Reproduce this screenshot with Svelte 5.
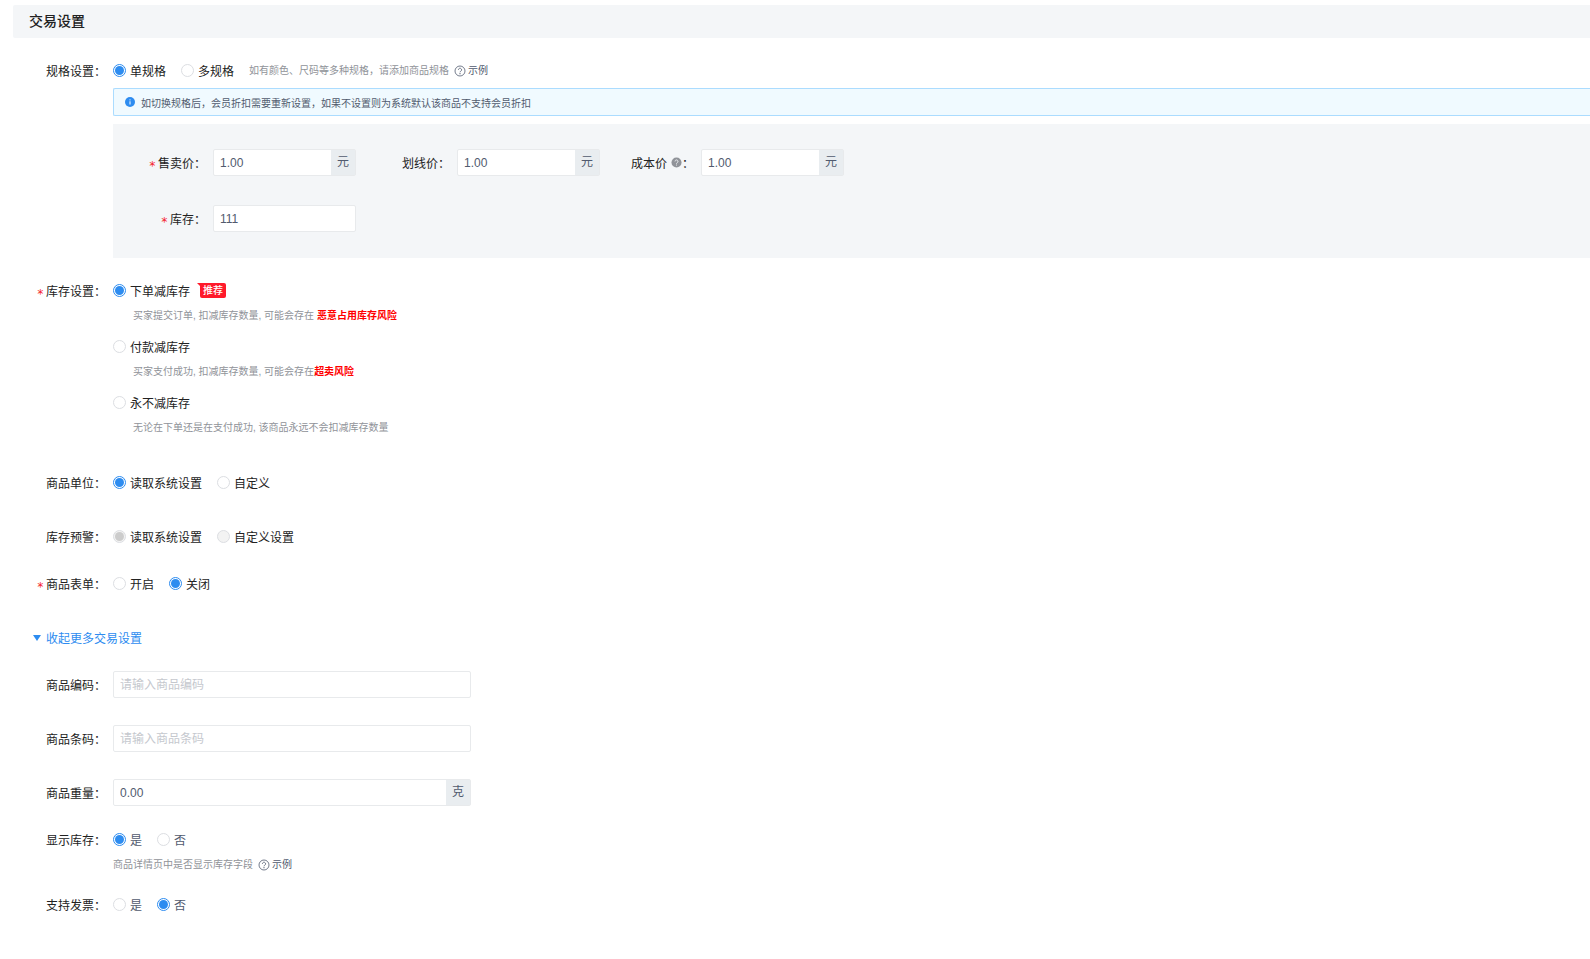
<script>

    let goods = {
        specType: "single",
        price: "1.00",
        linePrice: "1.00",
        costPrice: "1.00",
        stock: "111",
        stockType: "order",
        unitType: "system",
        warnType: "system",
        form: "off",
        code: "",
        barcode: "",
        weight: "0.00",
        showStock: "yes",
        invoice: "no"
    }

    let showMore = true
</script>

{#snippet helpIcon()}
    <svg class="help" viewBox="0 0 12 12" aria-hidden="true">
        <circle cx="6" cy="6" r="5" fill="none" stroke="currentColor" stroke-width=".8" />
        <path d="M4.4 4.8a1.6 1.6 0 1 1 2.4 1.4c-.5.3-.8.5-.8 1.1" fill="none" stroke="currentColor" stroke-width=".8" />
        <circle cx="6" cy="8.7" r=".6" fill="currentColor" />
    </svg>
{/snippet}

<div class="page">
    <h2>交易设置</h2>

    <div class="row spec" role="radiogroup" aria-labelledby="specLabel">
        <span class="label" id="specLabel">规格设置：</span>
        <div class="content">
            <div class="line">
                <label class="radio"><input type="radio" bind:group={goods.specType} value="single">单规格</label>
                <label class="radio"><input type="radio" bind:group={goods.specType} value="multi">多规格</label>
                <p class="hint with-link">如有颜色、尺码等多种规格，请添加商品规格 <a href="#example">{@render helpIcon()}示例</a></p>
            </div>
            <div class="alert">
                <svg class="info" viewBox="0 0 10 10" aria-hidden="true">
                    <circle cx="5" cy="5" r="5" fill="#2d8cf0" />
                    <path d="M5 4.3v3.2M5 2.4v1" stroke="#fff" />
                </svg>
                如切换规格后，会员折扣需要重新设置，如果不设置则为系统默认该商品不支持会员折扣
            </div>
            <div class="panel">
                <div class="fields">
                    <div class="field">
                        <label class="label" for="price"><i>*</i>售卖价：</label>
                        <div class="group">
                            <input id="price" type="text" bind:value={goods.price}>
                            <span>元</span>
                        </div>
                    </div>
                    <div class="field">
                        <label class="label" for="linePrice">划线价：</label>
                        <div class="group">
                            <input id="linePrice" type="text" bind:value={goods.linePrice}>
                            <span>元</span>
                        </div>
                    </div>
                    <div class="field">
                        <label class="label" for="costPrice">成本价
                            <svg class="tip" viewBox="0 0 12 12" aria-hidden="true">
                                <circle cx="6" cy="6" r="5.5" fill="#909399" />
                                <path d="M4.4 4.8a1.6 1.6 0 1 1 2.4 1.4c-.5.3-.8.5-.8 1.1M6 8.3v1" fill="none" stroke="#f4f6f8" />
                            </svg>：</label>
                        <div class="group">
                            <input id="costPrice" type="text" bind:value={goods.costPrice}>
                            <span>元</span>
                        </div>
                    </div>
                </div>
                <div class="field">
                    <label class="label" for="stock"><i>*</i>库存：</label>
                    <div class="group">
                        <input id="stock" type="text" bind:value={goods.stock}>
                    </div>
                </div>
            </div>
        </div>
    </div>

    <div class="row stock" role="radiogroup" aria-labelledby="stockLabel">
        <span class="label" id="stockLabel"><i>*</i>库存设置：</span>
        <div class="content options">
            <div>
                <div class="line">
                    <label class="radio"><input type="radio" bind:group={goods.stockType} value="order">下单减库存</label>
                    <span class="badge">推荐</span>
                </div>
                <p class="hint">买家提交订单, 扣减库存数量, 可能会存在 <b>恶意占用库存风险</b></p>
            </div>
            <div>
                <div class="line">
                    <label class="radio"><input type="radio" bind:group={goods.stockType} value="pay">付款减库存</label>
                </div>
                <p class="hint">买家支付成功, 扣减库存数量, 可能会存在<b>超卖风险</b></p>
            </div>
            <div>
                <div class="line">
                    <label class="radio"><input type="radio" bind:group={goods.stockType} value="never">永不减库存</label>
                </div>
                <p class="hint">无论在下单还是在支付成功, 该商品永远不会扣减库存数量</p>
            </div>
        </div>
    </div>

    <div class="row" role="radiogroup" aria-labelledby="unitLabel">
        <span class="label" id="unitLabel">商品单位：</span>
        <div class="line">
            <label class="radio"><input type="radio" bind:group={goods.unitType} value="system">读取系统设置</label>
            <label class="radio"><input type="radio" bind:group={goods.unitType} value="custom">自定义</label>
        </div>
    </div>

    <div class="row tight" role="radiogroup" aria-labelledby="warnLabel">
        <span class="label" id="warnLabel">库存预警：</span>
        <div class="line">
            <label class="radio"><input type="radio" bind:group={goods.warnType} value="system" disabled>读取系统设置</label>
            <label class="radio"><input type="radio" bind:group={goods.warnType} value="custom" disabled>自定义设置</label>
        </div>
    </div>

    <div class="row" role="radiogroup" aria-labelledby="formLabel">
        <span class="label" id="formLabel"><i>*</i>商品表单：</span>
        <div class="line">
            <label class="radio"><input type="radio" bind:group={goods.form} value="on">开启</label>
            <label class="radio"><input type="radio" bind:group={goods.form} value="off">关闭</label>
        </div>
    </div>

    <button class="toggle" class:closed={!showMore} type="button" on:click={() => (showMore = !showMore)}>
        <svg viewBox="0 0 8 6" aria-hidden="true"><path d="M0 0h8L4 6z" fill="currentColor" /></svg>
        {showMore ? "收起更多交易设置" : "展开更多交易设置"}
    </button>

    {#if showMore}
        <div class="row">
            <label class="label" for="code">商品编码：</label>
            <div class="group wide">
                <input id="code" type="text" placeholder="请输入商品编码" bind:value={goods.code}>
            </div>
        </div>

        <div class="row">
            <label class="label" for="barcode">商品条码：</label>
            <div class="group wide">
                <input id="barcode" type="text" placeholder="请输入商品条码" bind:value={goods.barcode}>
            </div>
        </div>

        <div class="row tight">
            <label class="label" for="weight">商品重量：</label>
            <div class="group wide">
                <input id="weight" type="text" bind:value={goods.weight}>
                <span>克</span>
            </div>
        </div>

        <div class="row show-stock" role="radiogroup" aria-labelledby="showLabel">
            <span class="label" id="showLabel">显示库存：</span>
            <div class="content">
                <div class="line">
                    <label class="radio light"><input type="radio" bind:group={goods.showStock} value="yes">是</label>
                    <label class="radio light"><input type="radio" bind:group={goods.showStock} value="no">否</label>
                </div>
                <p class="hint with-link">商品详情页中是否显示库存字段 <a href="#example">{@render helpIcon()}示例</a></p>
            </div>
        </div>

        <div class="row" role="radiogroup" aria-labelledby="invoiceLabel">
            <span class="label" id="invoiceLabel">支持发票：</span>
            <div class="line">
                <label class="radio light"><input type="radio" bind:group={goods.invoice} value="yes">是</label>
                <label class="radio light"><input type="radio" bind:group={goods.invoice} value="no">否</label>
            </div>
        </div>
    {/if}
</div>

<style>
    :global(body) {
        margin: 0;
        background: #fff;
    }

    .page {
        padding: 5px 0 0 13px;
        font-family: "Liberation Sans", "Noto Sans CJK SC", sans-serif;
        font-size: 12px;
        color: #222;
    }

    h2 {
        margin: 0 0 19px;
        padding-left: 16px;
        font-size: 14px;
        font-weight: 500;
        line-height: 32px;
        height: 33px;
        background: #f4f6f8;
        border-radius: 2px 0 0 2px;
    }

    .row {
        display: flex;
        align-items: flex-start;
        margin-bottom: 27px;
    }

    .row.tight {
        margin-bottom: 20px;
    }

    .row.spec {
        margin-bottom: 19px;
    }

    .row.stock {
        margin-bottom: 29px;
    }

    .row.show-stock {
        margin-bottom: 14px;
    }

    .content {
        flex: 1;
        min-width: 0;
    }

    .label {
        display: flex;
        justify-content: flex-end;
        align-items: center;
        flex: none;
        box-sizing: border-box;
        width: 100px;
        height: 27px;
        padding-right: 7px;
        white-space: nowrap;
    }

    .label i {
        margin-right: 2px;
        padding-top: 6px;
        font-family: "DejaVu Sans Mono", monospace;
        font-style: normal;
        line-height: 12px;
        color: #f5222d;
    }

    .line {
        display: flex;
        align-items: center;
        gap: 15px;
        height: 27px;
    }

    .radio {
        display: flex;
        align-items: center;
        gap: 4px;
        cursor: pointer;
    }

    .radio.light {
        color: #515a6e;
    }

    .radio input {
        appearance: none;
        box-sizing: border-box;
        display: grid;
        place-items: center;
        width: 13px;
        height: 13px;
        margin: 0;
        border: 1px solid #dcdee2;
        border-radius: 50%;
        background: #fff;
    }

    .radio input:checked {
        border-color: #2d8cf0;
    }

    .radio input:checked::before {
        content: "";
        width: 9px;
        height: 9px;
        border-radius: 50%;
        background: #2d8cf0;
    }

    .radio input:disabled {
        border-color: #dcdee2;
        background: #f3f3f3;
    }

    .radio input:disabled:checked::before {
        background: #ccc;
    }

    .hint {
        margin: 0;
        font-size: 10px;
        line-height: 24px;
        color: #909399;
    }

    .hint.with-link {
        display: flex;
        align-items: center;
        gap: 5px;
    }

    .hint a {
        display: flex;
        align-items: center;
        gap: 2px;
        color: #515a6e;
        text-decoration: none;
    }

    .hint b {
        color: #f00;
    }

    .help {
        width: 12px;
        height: 12px;
    }

    .alert {
        display: flex;
        align-items: center;
        gap: 6px;
        box-sizing: border-box;
        height: 28px;
        margin: 4px 0 8px;
        padding-left: 11px;
        font-size: 10px;
        color: #515a6e;
        background: #f0faff;
        border: 1px solid #abdcff;
        border-right: none;
        border-radius: 2px 0 0 2px;
    }

    .info {
        width: 10px;
        height: 10px;
    }

    .panel {
        display: flex;
        flex-direction: column;
        gap: 29px;
        padding: 25px 0 26px;
        background: #f4f6f8;
    }

    .fields {
        display: flex;
        flex-wrap: wrap;
        column-gap: 1px;
    }

    .field {
        display: flex;
    }

    .tip {
        width: 11px;
        height: 11px;
        margin-left: 4px;
    }

    .group {
        display: flex;
        box-sizing: border-box;
        width: 143px;
        height: 27px;
        border: 1px solid #e8eaec;
        border-radius: 2px;
        background: #fff;
    }

    .group.wide {
        width: 358px;
    }

    .group input {
        flex: 1;
        min-width: 0;
        padding: 0 6px;
        border: none;
        outline: none;
        background: none;
        font: inherit;
        color: #515a6e;
    }

    .group input::placeholder {
        color: #c5c8ce;
    }

    .group span {
        width: 24px;
        line-height: 25px;
        text-align: center;
        color: #515a6e;
        background: #e9edf0;
    }

    .options {
        display: flex;
        flex-direction: column;
        gap: 5px;
    }

    .options .hint {
        padding-left: 20px;
    }

    .options .line {
        gap: 10px;
    }

    .badge {
        position: relative;
        padding: 0 3px;
        font-size: 10px;
        font-weight: 500;
        line-height: 15px;
        color: #fff;
        background: #ff1a2b;
        border-radius: 0 2px 2px 2px;
    }

    .badge::before {
        content: "";
        position: absolute;
        top: 0;
        left: -3px;
        border-top: 3px solid #ff1a2b;
        border-left: 3px solid transparent;
    }

    .toggle {
        display: flex;
        align-items: center;
        gap: 5px;
        height: 27px;
        margin: 0 0 20px 20px;
        padding: 0;
        border: none;
        background: none;
        font: inherit;
        color: #2d8cf0;
        cursor: pointer;
    }

    .toggle svg {
        width: 8px;
        height: 6px;
    }

    .toggle.closed svg {
        transform: rotate(-90deg);
    }
</style>
